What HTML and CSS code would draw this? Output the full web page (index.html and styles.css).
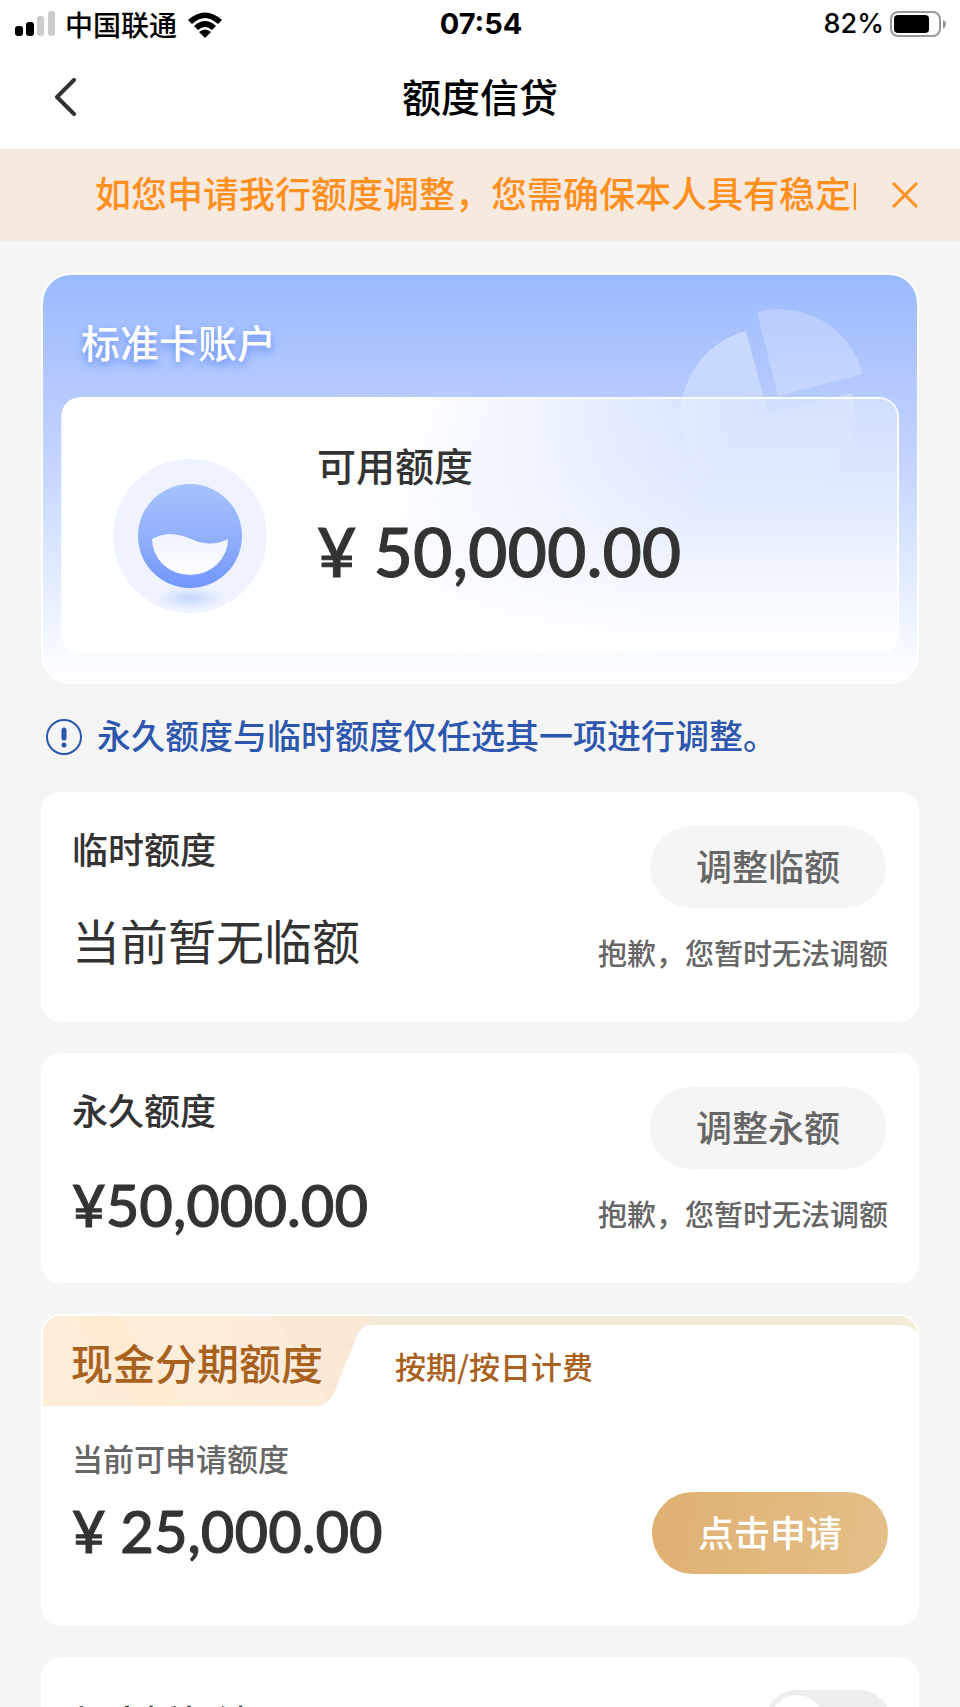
FILE: index.html
```html
<!DOCTYPE html>
<html lang="zh-CN">
<head>
<meta charset="utf-8">
<meta name="viewport" content="width=device-width, initial-scale=1">
<title>额度信贷</title>
<link rel="stylesheet" href="styles.css">
</head>
<body>
<div class="screen">
  <div class="status">
    <div class="status-left">
      <svg class="signal" viewBox="0 0 40 26" aria-hidden="true"><rect x="0" y="15" width="8" height="10" rx="3"/><rect x="11" y="11" width="8" height="14" rx="3"/><rect class="off" x="22" y="5" width="7" height="20" rx="3"/><rect class="off" x="33" y="0" width="7" height="25" rx="3"/></svg>
      <span>中国联通</span>
      <svg class="wifi" viewBox="0 0 36 27" aria-hidden="true"><path d="M1 9Q18-6 35 9L31 13Q18 1 5 13Z"/><path d="M7 15Q18 5 29 15L25 19Q18 13 11 19Z"/><path d="M12 21Q18 16 24 21L18 27Z"/></svg>
    </div>
    <div class="clock">07:54</div>
    <div class="status-right">
      <span>82%</span>
      <svg class="battery" viewBox="0 0 57 26" aria-hidden="true"><rect x="1" y="1" width="49" height="24" rx="7" fill="none" stroke="#999" stroke-width="2"/><rect x="4" y="4" width="35" height="18" rx="4"/><path d="M53 9Q56 10 56 13Q56 16 53 18Z" fill="#999"/></svg>
    </div>
  </div>
  <header class="nav">
    <button class="back" type="button" aria-label="返回"><svg viewBox="0 0 22 38" aria-hidden="true"><path d="M19 2L2 19L19 36"/></svg></button>
    <h1>额度信贷</h1>
  </header>
  <div class="notice">
    <p>如您申请我行额度调整，您需确保本人具有稳定的收入</p>
    <button class="close" type="button" aria-label="关闭"><svg viewBox="0 0 26 26" aria-hidden="true"><path d="M1 1L25 25M25 1L1 25"/></svg></button>
  </div>
  <main class="content">
    <section class="account">
      <svg class="pie" viewBox="0 0 184 206" aria-hidden="true">
        <defs><linearGradient id="fade" x1="0" y1="0" x2="0" y2="1"><stop offset="0" stop-color="#fff" stop-opacity=".4"/><stop offset="1" stop-color="#fff" stop-opacity="0"/></linearGradient></defs>
        <path d="M65 22A87 87 0 1 0 171 84L87 105Z" fill="url(#fade)"/>
        <path d="M76 3A87 87 0 0 1 182 65L97 87Z" fill="#fff" fill-opacity=".24"/>
      </svg>
      <h2>标准卡账户</h2>
      <div class="available">
        <svg class="gauge" viewBox="0 0 154 154" aria-hidden="true">
          <defs>
            <linearGradient id="ball" x1="0" y1="0" x2="0" y2="1"><stop offset="0" stop-color="#a5c2fd"/><stop offset=".5" stop-color="#93b0fb"/><stop offset="1" stop-color="#7196fd"/></linearGradient>
            <linearGradient id="wave" x1="0" y1="0" x2="0" y2="1"><stop offset="0" stop-color="#eef3ff"/><stop offset="1" stop-color="#fff"/></linearGradient>
            <radialGradient id="shade"><stop offset="0" stop-color="#c5d6fe"/><stop offset="1" stop-color="#c5d6fe" stop-opacity="0"/></radialGradient>
          </defs>
          <circle cx="77" cy="77" r="77" fill="#eef3ff"/>
          <ellipse cx="77" cy="139" rx="34" ry="12" fill="url(#shade)"/>
          <circle cx="77" cy="77" r="52" fill="url(#ball)"/>
          <path d="M39 80C54 72 66 75 78 80C91 86 103 86 115 80A38 36 0 0 1 39 80Z" fill="url(#wave)"/>
        </svg>
        <div>
          <h3>可用额度</h3>
          <p class="amount amount-large">¥ 50,000.00</p>
        </div>
      </div>
    </section>
    <p class="tip"><svg viewBox="0 0 36 36" aria-hidden="true"><circle cx="18" cy="18" r="17" fill="none" stroke="currentColor" stroke-width="2"/><path d="M18 11V19" stroke="currentColor" stroke-width="5" stroke-linecap="round"/><circle cx="18" cy="26" r="2.5" fill="currentColor"/></svg><span>永久额度与临时额度仅任选其一项进行调整。</span></p>
    <section class="card limit">
      <div>
        <h3>临时额度</h3>
        <p class="none">当前暂无临额</p>
      </div>
      <div class="action">
        <button class="pill" type="button">调整临额</button>
        <p class="sorry">抱歉，您暂时无法调额</p>
      </div>
    </section>
    <section class="card limit">
      <div>
        <h3>永久额度</h3>
        <p class="amount">¥50,000.00</p>
      </div>
      <div class="action">
        <button class="pill" type="button">调整永额</button>
        <p class="sorry">抱歉，您暂时无法调额</p>
      </div>
    </section>
    <section class="card cash">
      <div class="cash-head">
        <div class="tab">
          <svg class="tab-shape" viewBox="0 0 328 92" preserveAspectRatio="none" aria-hidden="true">
            <defs><linearGradient id="tab" x1="0" y1="0" x2="1" y2="0"><stop offset="0" stop-color="#feedd8"/><stop offset="1" stop-color="#f9e8d5"/></linearGradient></defs>
            <path d="M0 0H328V9C321 9 317 13 314 20L292 74Q286 90 272 90H7Q0 90 0 92Z" fill="url(#tab)"/>
            <path d="M32 0H76L141 90H94Z" fill="#fdebd0" opacity=".7"/>
            <path d="M76 0H230L285 84Q280 90 272 90H141Z" fill="#fdefe0" opacity=".5"/>
          </svg>
          <h3>现金分期额度</h3>
        </div>
        <p class="fee">按期/按日计费</p>
      </div>
      <div class="cash-body">
        <div>
          <p class="caption">当前可申请额度</p>
          <p class="amount">¥ 25,000.00</p>
        </div>
        <button class="pill gold" type="button">点击申请</button>
      </div>
    </section>
    <section class="card switch-row">
      <label for="auto">额度授权锁</label>
      <input class="switch" id="auto" type="checkbox" role="switch">
    </section>
  </main>
</div>
</body>
</html>
```

FILE: styles.css
```css
* { box-sizing: border-box; }
body { margin: 0; background: #f5f5f5; color: #333; font-family: "Noto Sans CJK SC", sans-serif; font-weight: 500; }
h1, h2, h3, p { margin: 0; font-weight: 500; }
button { padding: 0; border: 0; background: none; font: inherit; color: inherit; }
svg { display: block; flex: none; }
.screen { height: 100vh; overflow: hidden; }
.status { display: grid; grid-template-columns: 1fr auto 1fr; align-items: center; height: 48px; padding: 0 13px 0 15px; background: #fff; color: #000; font-size: 28px; line-height: 46px; }
.status-left, .status-right { display: flex; align-items: center; gap: 10px; }
.status-right { justify-content: flex-end; gap: 6px; font-family: Inter, sans-serif; font-size: 27px; }
.clock { font-family: Inter, sans-serif; font-size: 29px; font-weight: 700; }
.signal { width: 40px; height: 26px; }
.signal .off { fill: #ccc; }
.wifi { width: 36px; height: 27px; }
.battery { width: 57px; height: 26px; }
.nav { display: grid; grid-template-columns: 1fr auto 1fr; align-items: center; height: 101px; padding: 0 55px 4px; background: #fff; color: #000; }
.nav h1 { padding-bottom: 4px; font-size: 39px; line-height: 90px; }
.back svg { width: 22px; height: 38px; fill: none; stroke: #333; stroke-width: 4; stroke-linecap: round; stroke-linejoin: round; }
.notice { display: flex; align-items: center; gap: 36px; height: 92px; padding: 0 42px 0 95px; background: #f6eadf; color: #ff901f; }
.notice p { flex: 1; min-width: 0; overflow: hidden; white-space: nowrap; padding-bottom: 6px; font-size: 36px; line-height: 86px; }
.close svg { width: 26px; height: 26px; fill: none; stroke: currentColor; stroke-width: 3; }
.content { display: flex; flex-direction: column; padding: 32px 41px 0; }
.account { position: relative; padding: 26px 18px 28px; border: 2px solid #fff; border-radius: 30px; background: linear-gradient(#9bbafe 0%, #b6cbff 30%, #c5d2ff 45%, #d2e1ff 60%, #f4f8ff 90%, #fdfeff 100%); }
.pie { position: absolute; top: 34px; right: 52px; width: 184px; height: 206px; }
.account h2 { padding: 0 20px; color: #fff; font-size: 39px; line-height: 80px; text-shadow: 0 4px 8px #6088f0; }
.available { position: relative; display: flex; align-items: flex-start; gap: 50px; height: 257px; margin-top: 16px; padding: 30px 50px 0; border: 2px solid rgba(255, 255, 255, .7); border-radius: 20px; background: linear-gradient(118deg, #fff 36%, rgba(255, 255, 255, 0) 72%), linear-gradient(to bottom, rgba(226, 236, 255, .6) 0%, rgba(240, 244, 255, .65) 50%, rgba(255, 255, 255, .8) 95%); }
.gauge { width: 154px; height: 154px; margin-top: 30px; }
.available h3 { font-size: 39px; line-height: 70px; }
.amount { font-family: Lato, sans-serif; font-size: 58px; line-height: 70px; white-space: nowrap; -webkit-text-stroke: 1px currentColor; }
.amount-large { font-size: 68px; line-height: 104px; }
.tip { display: flex; align-items: center; gap: 15px; padding-left: 5px; margin: 26px 0 29px; color: #2d56ae; font-size: 34px; line-height: 50px; }
.tip span { padding-bottom: 3px; }
.tip svg { width: 36px; height: 36px; }
.card { margin-bottom: 31px; border-radius: 20px; background: #fff; }
.limit { display: flex; justify-content: space-between; height: 230px; padding: 34px 31px 0; }
.limit h3 { font-size: 36px; line-height: 44px; }
.none { margin-top: 34px; font-size: 48px; font-weight: 400; line-height: 70px; }
.limit .amount { margin-top: 39px; }
.action { display: flex; flex-direction: column; align-items: flex-end; }
.pill { width: 236px; height: 82px; padding-bottom: 4px; border-radius: 41px; background: #f5f5f5; color: #666; font-size: 36px; line-height: 78px; }
.limit .pill { margin-right: 2px; }
.sorry { margin-top: 22px; color: #666; font-size: 29px; line-height: 44px; }
.cash { height: 312px; border: 2px solid #fff; }
.cash-head { display: flex; height: 92px; border-top: 9px solid #f6ead8; border-radius: 18px 18px 0 0; }
.tab { position: relative; width: 328px; height: 92px; margin-top: -9px; padding-left: 28px; }
.tab-shape { position: absolute; inset: 0; width: 100%; height: 100%; border-radius: 18px 0 0 0; }
.tab h3 { position: relative; color: #a9611f; font-size: 42px; line-height: 92px; }
.fee { margin-left: 24px; color: #a9611f; font-size: 31px; line-height: 82px; }
.cash-body { display: flex; justify-content: space-between; padding: 26px 29px 0; }
.caption { color: #666; font-size: 31px; line-height: 48px; }
.cash .amount { margin-top: 14px; }
.gold { margin-top: 58px; background: linear-gradient(100deg, #dfb071, #e4c089); color: #fff; }
.switch-row { display: flex; align-items: center; justify-content: space-between; padding: 33px 28px 33px 31px; margin: 0; }
.switch-row label { font-size: 36px; line-height: 48px; padding-bottom: 2px; }
.switch { position: relative; width: 126px; height: 64px; margin: 0; border-radius: 32px; background: #ededed; appearance: none; }
.switch::before { content: ""; position: absolute; top: 5px; left: 5px; width: 54px; height: 54px; border-radius: 50%; background: #fff; }
```
